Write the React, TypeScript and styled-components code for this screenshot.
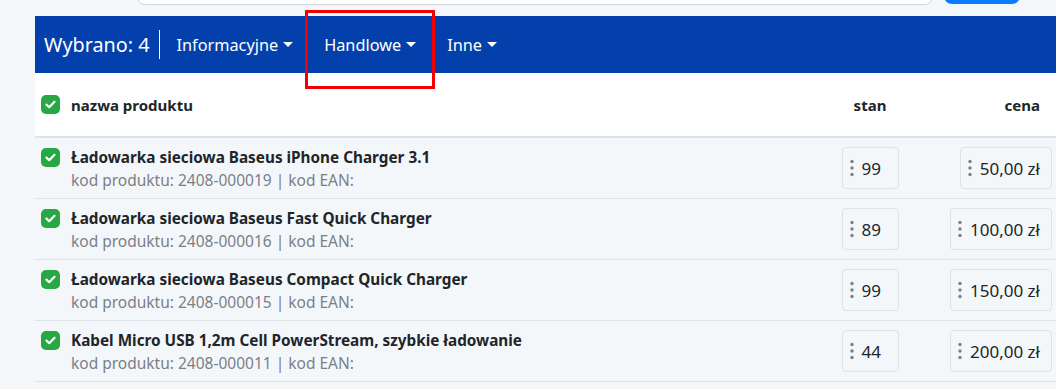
import React from 'react';
import styled, { createGlobalStyle } from 'styled-components';

const GlobalStyle = createGlobalStyle`
  body {
    margin: 0;
    background: #f4f7fa;
    font-family: 'Noto Sans', 'Open Sans', sans-serif;
    color: #212529;
  }
`;

const Page = styled.div`
  width: 1056px;
  height: 389px;
  overflow: hidden;
  position: relative;
`;

const TopRow = styled.div`
  height: 16px;
  display: flex;
  gap: 11px;
  padding-left: 137px;
  align-items: flex-end;
  padding-bottom: 11px;
  box-sizing: border-box;
`;

const SearchInput = styled.div`
  width: 796px;
  height: 38px;
  background: #fff;
  border: 1px solid #ced4da;
  border-radius: 8px;
  box-sizing: border-box;
`;

const SearchButton = styled.div`
  width: 76px;
  height: 38px;
  margin-bottom: 1px;
  background: #0a7cff;
  border-radius: 8px;
`;

const Panel = styled.div`
  margin-left: 35px;
`;

const ActionBar = styled.div`
  height: 57px;
  background: #0340ac;
  display: flex;
  align-items: center;
  padding-left: 9px;
  color: #fff;
`;

const Selected = styled.div`
  font-size: 19.8px;
  padding-right: 10px;
  border-right: 1px solid #fff;
  line-height: 29px;
`;

const Dropdown = styled.div<{ $gap: number }>`
  display: flex;
  align-items: center;
  font-size: 16.3px;
  margin-left: ${(p) => p.$gap}px;

  &::after {
    content: '';
    margin-left: 5px;
    border-left: 5px solid transparent;
    border-right: 5px solid transparent;
    border-top: 5px solid #fff;
  }
`;

const Highlight = styled.div`
  position: absolute;
  left: 305px;
  top: 10px;
  width: 130px;
  height: 79px;
  border: 3px solid #f30000;
  box-sizing: border-box;
`;

const Grid = styled.div`
  display: grid;
  grid-template-columns: 1fr 100px 136px;
  align-items: center;
`;

const HeaderRow = styled(Grid)`
  height: 63px;
  background: #fff;
  border-bottom: 2px solid #dee2e6;
  font-weight: 700;
  font-size: 15px;
`;

const ItemRow = styled(Grid)`
  height: 60px;
  border-bottom: 1px solid #dee2e6;
`;

const NameCell = styled.div<{ $top?: boolean }>`
  display: flex;
  align-items: ${(p) => (p.$top ? 'flex-start' : 'center')};
  gap: 11px;
  padding-left: 6px;
`;

const Check = styled.div`
  width: 19px;
  height: 19px;
  border-radius: 5px;
  background: #28a745;
  display: flex;
  align-items: center;
  justify-content: center;
  flex-shrink: 0;
`;

const Title = styled.div`
  font-weight: 700;
  font-size: 15.3px;
  line-height: 20px;
  margin-top: 1px;
  color: #212529;
`;

const Sub = styled.div`
  font-size: 15.5px;
  line-height: 20px;
  margin-top: 3px;
  color: #7a8087;
`;

const HeadCell = styled.div<{ $align: 'center' | 'right' }>`
  text-align: ${(p) => p.$align};
  padding-right: ${(p) => (p.$align === 'right' ? '16px' : '0')};
`;

const ValueCell = styled.div<{ $align: 'center' | 'right' }>`
  display: flex;
  justify-content: ${(p) => (p.$align === 'right' ? 'flex-end' : 'center')};
  padding-right: ${(p) => (p.$align === 'right' ? '4px' : '0')};
`;

const ValueBox = styled.div<{ $fixed?: boolean }>`
  height: 42px;
  box-sizing: border-box;
  ${(p) => (p.$fixed ? 'width: 57px;' : '')}
  padding: 0 11px 0 7px;
  border: 1px solid #dee2e6;
  border-radius: 4px;
  display: flex;
  align-items: center;
  gap: 8px;
  font-size: 17px;
  color: #212529;
`;

const CheckIcon = () => (
  <svg width="11" height="9" viewBox="0 0 11 9">
    <path d="M1.5 4.6 L4.2 7.2 L9.5 1.8" fill="none" stroke="#fff" strokeWidth="2.2" strokeLinecap="round" strokeLinejoin="round" />
  </svg>
);

const Dots = () => (
  <svg width="4" height="18" viewBox="0 0 4 18">
    <circle cx="2" cy="2.5" r="1.7" fill="#7a8087" />
    <circle cx="2" cy="9" r="1.7" fill="#7a8087" />
    <circle cx="2" cy="15.5" r="1.7" fill="#7a8087" />
  </svg>
);

const products = [
  { name: 'Ładowarka sieciowa Baseus iPhone Charger 3.1', code: '2408-000019', stock: 99, price: '50,00 zł' },
  { name: 'Ładowarka sieciowa Baseus Fast Quick Charger', code: '2408-000016', stock: 89, price: '100,00 zł' },
  { name: 'Ładowarka sieciowa Baseus Compact Quick Charger', code: '2408-000015', stock: 99, price: '150,00 zł' },
  { name: 'Kabel Micro USB 1,2m Cell PowerStream, szybkie ładowanie', code: '2408-000011', stock: 44, price: '200,00 zł' },
];

const App = () => {
  return (
    <Page>
      <GlobalStyle />
      <TopRow>
        <SearchInput />
        <SearchButton />
      </TopRow>
      <Panel>
        <ActionBar>
          <Selected>Wybrano: 4</Selected>
          <Dropdown $gap={16}>Informacyjne</Dropdown>
          <Dropdown $gap={31}>Handlowe</Dropdown>
          <Dropdown $gap={31}>Inne</Dropdown>
        </ActionBar>
        <HeaderRow>
          <NameCell>
            <Check><CheckIcon /></Check>
            nazwa produktu
          </NameCell>
          <HeadCell $align="center">stan</HeadCell>
          <HeadCell $align="right">cena</HeadCell>
        </HeaderRow>
        {products.map((p) => (
          <ItemRow key={p.code}>
            <NameCell $top>
              <Check style={{ marginTop: 2 }}><CheckIcon /></Check>
              <div>
                <Title>{p.name}</Title>
                <Sub>kod produktu: {p.code} | kod EAN:</Sub>
              </div>
            </NameCell>
            <ValueCell $align="center">
              <ValueBox $fixed><Dots />{p.stock}</ValueBox>
            </ValueCell>
            <ValueCell $align="right">
              <ValueBox><Dots />{p.price}</ValueBox>
            </ValueCell>
          </ItemRow>
        ))}
      </Panel>
      <Highlight />
    </Page>
  );
};

export default App;
